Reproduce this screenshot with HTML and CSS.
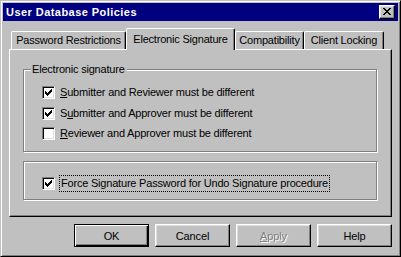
FILE: index.html
```html
<!DOCTYPE html>
<html>
<head>
<meta charset="utf-8">
<link rel="stylesheet" href="styles.css">
</head>
<body>
<div class="window">
  <div class="titlebar">
    <span class="title">User Database Policies</span>
    <span class="close">
      <svg width="8" height="7" viewBox="0 0 8 7" shape-rendering="crispEdges">
        <path d="M0 0h2v1H0zM6 0h2v1H6zM1 1h2v1H1zM5 1h2v1H5zM2 2h4v1H2zM3 3h2v1H3zM2 4h4v1H2zM1 5h2v1H1zM5 5h2v1H5zM0 6h2v1H0zM6 6h2v1H6z" fill="#000"/>
      </svg>
    </span>
  </div>
  <div class="content">
    <div class="tabs">
      <div class="tab t1">Password Restrictions</div>
      <div class="tab active t2">Electronic Signature</div>
      <div class="tab t3">Compatibility</div>
      <div class="tab t4">Client Locking</div>
    </div>
    <div class="panel">
      <div class="group g1">
        <div class="legend">Electronic signature</div>
        <div class="row r1">
          <span class="cb checked"><svg width="7" height="7" viewBox="0 0 7 7" shape-rendering="crispEdges"><path d="M6 0h1v1H6zM5 1h2v1H5zM0 2h1v1H0zM4 2h3v1H4zM0 3h2v1H0zM3 3h3v1H3zM0 4h5v1H0zM1 5h3v1H1zM2 6h1v1H2z" fill="#000"/></svg></span>
          <span class="label"><u>S</u>ubmitter and Reviewer must be different</span>
        </div>
        <div class="row r2">
          <span class="cb checked"><svg width="7" height="7" viewBox="0 0 7 7" shape-rendering="crispEdges"><path d="M6 0h1v1H6zM5 1h2v1H5zM0 2h1v1H0zM4 2h3v1H4zM0 3h2v1H0zM3 3h3v1H3zM0 4h5v1H0zM1 5h3v1H1zM2 6h1v1H2z" fill="#000"/></svg></span>
          <span class="label">S<u>u</u>bmitter and Approver must be different</span>
        </div>
        <div class="row r3">
          <span class="cb"></span>
          <span class="label"><u>R</u>eviewer and Approver must be different</span>
        </div>
      </div>
      <div class="group g2">
        <div class="row r4">
          <span class="cb checked"><svg width="7" height="7" viewBox="0 0 7 7" shape-rendering="crispEdges"><path d="M6 0h1v1H6zM5 1h2v1H5zM0 2h1v1H0zM4 2h3v1H4zM0 3h2v1H0zM3 3h3v1H3zM0 4h5v1H0zM1 5h3v1H1zM2 6h1v1H2z" fill="#000"/></svg></span>
          <span class="label focus">Force Signature Password for Undo Signature procedure</span>
        </div>
      </div>
    </div>
    <div class="buttons">
      <button class="btn default">OK</button>
      <button class="btn">Cancel</button>
      <button class="btn disabled"><u>A</u>pply</button>
      <button class="btn">Help</button>
    </div>
  </div>
</div>
</body>
</html>
```
FILE: styles.css
```css
html, body {
  margin: 0;
  padding: 0;
  background: #c0c0c0;
}
body {
  font-family: "Liberation Sans", Arial, sans-serif;
  font-size: 11px;
  color: #000;
}
.window {
  width: 401px;
  height: 257px;
  box-sizing: border-box;
  background: #c0c0c0;
  border: 1px solid;
  border-color: #c0c0c0 #000 #000 #c0c0c0;
  box-shadow: inset 1px 1px #fff, inset -1px -1px #808080;
  padding: 2px;
  display: flex;
  flex-direction: column;
}
.titlebar {
  height: 18px;
  flex: none;
  background: #000080;
  color: #fff;
  display: flex;
  align-items: center;
  justify-content: space-between;
  padding: 0 3px 0 3px;
}
.title {
  font-weight: bold;
  letter-spacing: 0.45px;
  line-height: 14px;
}
.close {
  width: 16px;
  height: 14px;
  box-sizing: border-box;
  background: #c0c0c0;
  border: 1px solid;
  border-color: #fff #000 #000 #fff;
  box-shadow: inset -1px -1px #808080, inset 1px 1px #dfdfdf;
  display: flex;
  align-items: center;
  justify-content: center;
  padding-bottom: 1px;
}
.close svg { display: block; }
.content {
  padding: 7px 6px 0;
}
.tabs {
  display: flex;
  align-items: flex-end;
  height: 21px;
  padding-left: 2px;
  letter-spacing: -0.2px;
}
.tab {
  height: 18px;
  box-sizing: border-box;
  border: 1px solid;
  border-color: #fff #000 transparent #fff;
  border-bottom: 0;
  border-radius: 2px 2px 0 0;
  box-shadow: inset -1px 0 #808080;
  display: flex;
  align-items: center;
  justify-content: center;
  white-space: nowrap;
  padding-bottom: 1px;
}
.tab.active {
  height: 22px;
  margin-bottom: -1px;
  position: relative;
  z-index: 1;
  background: #c0c0c0;
  padding-bottom: 2px;
}
.t1 { width: 115px; }
.t2 { width: 109px; }
.t3 { width: 69px; }
.t4 { width: 80px; }
.panel {
  height: 168px;
  box-sizing: border-box;
  border: 1px solid;
  border-color: #fff #000 #000 #fff;
  box-shadow: inset -1px -1px #808080;
  padding: 19px 13px 0;
}
.group {
  width: 354px;
  box-sizing: border-box;
  border: 1px solid #808080;
  box-shadow: inset 1px 1px #fff, 1px 1px #fff;
  padding-left: 18px;
}
.g1 { height: 83px; }
.g2 { height: 39px; margin-top: 9px; padding-top: 15px; }
.legend {
  width: fit-content;
  margin: -7px 0 0 -11px;
  padding: 0 2px 0 1px;
  line-height: 13px;
  background: #c0c0c0;
  letter-spacing: -0.2px;
}
.row {
  display: flex;
  align-items: center;
  height: 13px;
  letter-spacing: -0.2px;
}
.r1 { margin-top: 10px; }
.r2 { margin-top: 8px; }
.r3 { margin-top: 7px; }
.cb {
  width: 13px;
  height: 13px;
  flex: none;
  box-sizing: border-box;
  background: #fff;
  border: 1px solid;
  border-color: #808080 #fff #fff #808080;
  box-shadow: inset 1px 1px #000, inset -1px -1px #dfdfdf;
}
.cb svg {
  display: block;
  margin: 2px;
}
.label {
  margin-left: 5px;
  white-space: nowrap;
  line-height: 13px;
}
.label u { text-underline-offset: 1px; }
.label.focus {
  margin-left: 4px;
  border: 1px dotted #000;
  padding: 1px 1px;
  line-height: 13px;
}
.buttons {
  display: flex;
  justify-content: flex-end;
  gap: 6px;
  margin-top: 7px;
}
.btn {
  width: 75px;
  height: 23px;
  box-sizing: border-box;
  margin: 0;
  padding: 0;
  background: #c0c0c0;
  border: 1px solid;
  border-color: #fff #000 #000 #fff;
  box-shadow: inset -1px -1px #808080, inset 1px 1px #dfdfdf;
  font: inherit;
  color: #000;
  letter-spacing: -0.1px;
}
.btn.default {
  border-color: #000;
  box-shadow: inset 1px 1px #fff, inset -1px -1px #000, inset -2px -2px #808080;
}
.btn.disabled {
  color: #808080;
  text-shadow: 1px 1px #fff;
}
```
